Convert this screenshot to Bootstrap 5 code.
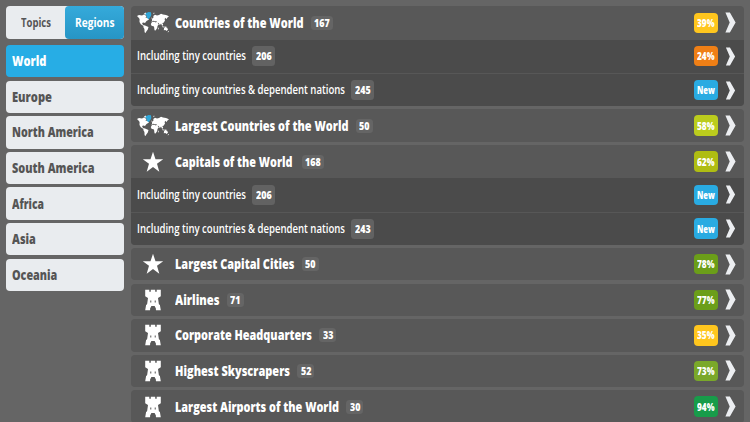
<!DOCTYPE html>
<html lang="en">
<head>
<meta charset="utf-8">
<meta name="viewport" content="width=device-width, initial-scale=1">
<title>Quiz regions</title>
<link href="https://cdn.jsdelivr.net/npm/bootstrap@5.3.0/dist/css/bootstrap.min.css" rel="stylesheet">
<style>
html, body { height: 100%; }
body { background: #656565; font-family: "Open Sans", "Noto Sans", sans-serif; color: #fff; line-height: 1; }
.app { height: 422px; padding: 6.2px 6.4px 0 6.2px; gap: 6.3px; }
.side { width: 118.3px; flex: none; gap: 3.1px; }
.switcher { height: 32.7px; background: #e9ecef; border-radius: 4px; margin-bottom: 3px; flex: none; font-size: 12px; font-weight: 700; color: #555; }
.switcher .on { background: linear-gradient(#35aadb, #2695c5); color: #fff; border-radius: 4px; }
.region { height: 32.5px; flex: none; background: #e9ecef; color: #555; border-radius: 4px; padding-left: 6.3px; font-size: 14px; font-weight: 800; }
.region.on { background: #27ade5; color: #fff; }
.groups { gap: 3.1px; }
.group { border-radius: 4px; background: #585858; flex: none; overflow: hidden; }
.quiz { height: 32.5px; padding: 0 7.5px 0 6px; font-size: 14px; font-weight: 800; }
.sub { height: 33.3px; background: #4b4b4b; padding: 0 7.5px 0 6px; font-size: 12px; font-weight: 600; }
.sub + .sub { border-top: 1px solid #575757; }
.quiz.top { height: 33.4px; }
.pic { width: 32px; height: 22px; margin-right: 6.7px; flex: none; }
.fit { display: inline-block; white-space: nowrap; flex: none; }
.fit > span { display: inline-block; transform-origin: 0 50%; }
.num { background: #656565; border-radius: 3.5px; font-size: 10px; font-weight: 800; height: 14px; margin-left: 7px; padding: 0 3.2px; }
.num.far { margin-left: 9px; }
.sub .num { height: 20px; margin-left: 6.3px; padding: 0 3.6px; background: #626262; }
.score { width: 24px; height: 20.5px; border-radius: 4px; font-size: 10px; font-weight: 800; flex: none; }
.arrow { width: 11px; height: 21px; margin-left: 7.5px; flex: none; }
.sub .arrow { height: 19px; }
.c-yellow { background: #ffc61e; } .c-orange { background: #ef7f16; } .c-blue { background: #29abe2; }
.c-lime { background: #bbcc1d; } .c-olive { background: #afbd13; } .c-green { background: #6b9e19; }
.c-leaf { background: #7aa82a; } .c-emerald { background: #189c4a; }
</style>
<script src="https://cdn.jsdelivr.net/npm/bootstrap@5.3.0/dist/js/bootstrap.bundle.min.js"></script>
</head>
<body class="overflow-hidden">
<svg class="d-none" xmlns="http://www.w3.org/2000/svg">
  <symbol id="map" viewBox="0 0 32 22">
    <path fill="#fff" d="M0 4 2 3 5 3.4 7 2.6 9.5 4 8.5 6 10.5 5.5 12 7.5 9.5 9 8 11 6.5 10.6 5 11 6 13 8 13.6 11.5 15 10.8 17.5 9.3 19.5 8.6 21 7.6 20.2 7.4 17 6.3 15 6.5 14 3.8 12.3 2.5 10 2.6 7 1.5 5.5ZM7 1.5 9 .5 9.5 2.2 8 2.8ZM14.5 10 15.2 8 14.8 7 16.5 5.5 16.3 4 18 2.8 20 3.5 22 3 24 1.7 26 2.6 29 3 32 4.2 30.5 5.5 29.3 7.2 28.6 5.8 27.6 7 28 8.5 26.6 10.8 25.2 11 26.2 12.5 25.2 14 24 11.5 22.8 13.3 21.8 11 20.5 10.8 21.8 12.3 20.5 14 20.2 16 18.6 18.5 17.5 18.3 17 14.5 14.5 13.8 13.8 12 15 10 17 9.8 19 10.5 20 9.3 17.8 9.3 16.2 8.8ZM27 16.3 28.6 15.2 30 15.4 31 17.5 29.7 19 28.3 18 26.8 18.3ZM25 14.2 27.5 14.8 29.5 14.6 29 15.4 25.6 15.2ZM21.3 15.5 21.9 16 21.2 17.8 20.8 17ZM31 19 32 19 30.8 20.8ZM16 1 17.6.7 17 2ZM14.2 6 15 5.5 15 6.8Z"/>
    <path fill="#2fa7d9" d="M8.8 1.2 11.5.1 14 .3 14.3 3 13.4 5 11.6 7.3 10 6 9.5 3.8 8.5 2.5Z"/>
  </symbol>
  <symbol id="star" viewBox="0 0 32 22">
    <path fill="#fff" d="m16 .8 2.5 7.4 7.7.05-6.2 4.6 2.3 7.8L16 16.1l-6.3 4.55 2.3-7.8-6.2-4.6 7.7-.05Z"/>
  </symbol>
  <symbol id="tower" viewBox="0 0 32 22">
    <path fill="#fff" d="M8.2.7h4.1v2h1.5v-2h4.4v2h1.5v-2h4.1v6.6L21 9l.9 6.2 1 .8.9 5.3h-4.9v-1.8L17.6 17h-3.2l-1.3 2.5v1.8H8.2L9.1 16l1-.8L11 9 8.2 7.3Z"/>
    <path fill="#858585" d="M13 11.6h1.4v1.9H13ZM17.6 11.6H19v1.9h-1.4Z"/>
  </symbol>
  <symbol id="chev" viewBox="0 0 11 21">
    <path fill="#eceef1" d="M.4.5h4.5l5.7 10-5.7 10H.4l4.3-10Z"/>
  </symbol>
</svg>

<div class="app d-flex">
  <nav class="side d-flex flex-column">
    <div class="switcher d-flex">
      <div class="w-50 d-flex align-items-center justify-content-center"><span class="fit" data-w="30"><span>Topics</span></span></div>
      <div class="on w-50 d-flex align-items-center justify-content-center"><span class="fit" data-w="39.5"><span>Regions</span></span></div>
    </div>
    <div class="region on d-flex align-items-center"><span class="fit" data-w="34.5"><span>World</span></span></div>
    <div class="region d-flex align-items-center"><span class="fit" data-w="40"><span>Europe</span></span></div>
    <div class="region d-flex align-items-center"><span class="fit" data-w="81.8"><span>North America</span></span></div>
    <div class="region d-flex align-items-center"><span class="fit" data-w="82.5"><span>South America</span></span></div>
    <div class="region d-flex align-items-center"><span class="fit" data-w="32"><span>Africa</span></span></div>
    <div class="region d-flex align-items-center"><span class="fit" data-w="23.8"><span>Asia</span></span></div>
    <div class="region d-flex align-items-center"><span class="fit" data-w="45.3"><span>Oceania</span></span></div>
  </nav>

  <main class="groups flex-grow-1 d-flex flex-column">
    <section class="group">
      <div class="quiz top d-flex align-items-center"><svg class="pic"><use href="#map"/></svg><span class="fit" data-w="128.5"><span>Countries of the World</span></span><span class="num d-flex align-items-center"><span class="fit" data-w="15.6"><span>167</span></span></span><span class="score c-yellow ms-auto d-flex align-items-center justify-content-center"><span class="fit" data-w="17.5"><span>39%</span></span></span><svg class="arrow"><use href="#chev"/></svg></div>
      <div class="sub d-flex align-items-center"><span class="fit" data-w="109"><span>Including tiny countries</span></span><span class="num d-flex align-items-center"><span class="fit" data-w="15.6"><span>206</span></span></span><span class="score c-orange ms-auto d-flex align-items-center justify-content-center"><span class="fit" data-w="17.5"><span>24%</span></span></span><svg class="arrow"><use href="#chev"/></svg></div>
      <div class="sub d-flex align-items-center"><span class="fit" data-w="208"><span>Including tiny countries &amp; dependent nations</span></span><span class="num d-flex align-items-center"><span class="fit" data-w="15.6"><span>245</span></span></span><span class="score c-blue ms-auto d-flex align-items-center justify-content-center"><span class="fit" data-w="17.8"><span>New</span></span></span><svg class="arrow"><use href="#chev"/></svg></div>
    </section>
    <section class="group">
      <div class="quiz d-flex align-items-center"><svg class="pic"><use href="#map"/></svg><span class="fit" data-w="173.5"><span>Largest Countries of the World</span></span><span class="num d-flex align-items-center"><span class="fit" data-w="10.4"><span>50</span></span></span><span class="score c-lime ms-auto d-flex align-items-center justify-content-center"><span class="fit" data-w="17.5"><span>58%</span></span></span><svg class="arrow"><use href="#chev"/></svg></div>
    </section>
    <section class="group">
      <div class="quiz top d-flex align-items-center"><svg class="pic"><use href="#star"/></svg><span class="fit" data-w="117.5"><span>Capitals of the World</span></span><span class="num far d-flex align-items-center"><span class="fit" data-w="15.6"><span>168</span></span></span><span class="score c-olive ms-auto d-flex align-items-center justify-content-center"><span class="fit" data-w="17.5"><span>62%</span></span></span><svg class="arrow"><use href="#chev"/></svg></div>
      <div class="sub d-flex align-items-center"><span class="fit" data-w="109"><span>Including tiny countries</span></span><span class="num d-flex align-items-center"><span class="fit" data-w="15.6"><span>206</span></span></span><span class="score c-blue ms-auto d-flex align-items-center justify-content-center"><span class="fit" data-w="17.8"><span>New</span></span></span><svg class="arrow"><use href="#chev"/></svg></div>
      <div class="sub d-flex align-items-center"><span class="fit" data-w="208"><span>Including tiny countries &amp; dependent nations</span></span><span class="num d-flex align-items-center"><span class="fit" data-w="15.6"><span>243</span></span></span><span class="score c-blue ms-auto d-flex align-items-center justify-content-center"><span class="fit" data-w="17.8"><span>New</span></span></span><svg class="arrow"><use href="#chev"/></svg></div>
    </section>
    <section class="group">
      <div class="quiz d-flex align-items-center"><svg class="pic"><use href="#star"/></svg><span class="fit" data-w="119.5"><span>Largest Capital Cities</span></span><span class="num d-flex align-items-center"><span class="fit" data-w="10.4"><span>50</span></span></span><span class="score c-green ms-auto d-flex align-items-center justify-content-center"><span class="fit" data-w="17.5"><span>78%</span></span></span><svg class="arrow"><use href="#chev"/></svg></div>
    </section>
    <section class="group">
      <div class="quiz d-flex align-items-center"><svg class="pic"><use href="#tower"/></svg><span class="fit" data-w="44.5"><span>Airlines</span></span><span class="num d-flex align-items-center"><span class="fit" data-w="10.4"><span>71</span></span></span><span class="score c-green ms-auto d-flex align-items-center justify-content-center"><span class="fit" data-w="17.5"><span>77%</span></span></span><svg class="arrow"><use href="#chev"/></svg></div>
    </section>
    <section class="group">
      <div class="quiz d-flex align-items-center"><svg class="pic"><use href="#tower"/></svg><span class="fit" data-w="137"><span>Corporate Headquarters</span></span><span class="num d-flex align-items-center"><span class="fit" data-w="10.4"><span>33</span></span></span><span class="score c-yellow ms-auto d-flex align-items-center justify-content-center"><span class="fit" data-w="17.5"><span>35%</span></span></span><svg class="arrow"><use href="#chev"/></svg></div>
    </section>
    <section class="group">
      <div class="quiz d-flex align-items-center"><svg class="pic"><use href="#tower"/></svg><span class="fit" data-w="115"><span>Highest Skyscrapers</span></span><span class="num d-flex align-items-center"><span class="fit" data-w="10.4"><span>52</span></span></span><span class="score c-leaf ms-auto d-flex align-items-center justify-content-center"><span class="fit" data-w="17.5"><span>73%</span></span></span><svg class="arrow"><use href="#chev"/></svg></div>
    </section>
    <section class="group">
      <div class="quiz d-flex align-items-center"><svg class="pic"><use href="#tower"/></svg><span class="fit" data-w="164"><span>Largest Airports of the World</span></span><span class="num d-flex align-items-center"><span class="fit" data-w="10.4"><span>30</span></span></span><span class="score c-emerald ms-auto d-flex align-items-center justify-content-center"><span class="fit" data-w="17.5"><span>94%</span></span></span><svg class="arrow"><use href="#chev"/></svg></div>
    </section>
  </main>
</div>
<script>
// Condense every label to its own column width.
document.querySelectorAll('.fit').forEach(function (box) {
  var label = box.firstElementChild, w = parseFloat(box.dataset.w);
  var natural = label.getBoundingClientRect().width;
  box.style.width = w + 'px';
  label.style.transform = 'scaleX(' + (w / natural) + ')';
});
</script>
</body>
</html>
